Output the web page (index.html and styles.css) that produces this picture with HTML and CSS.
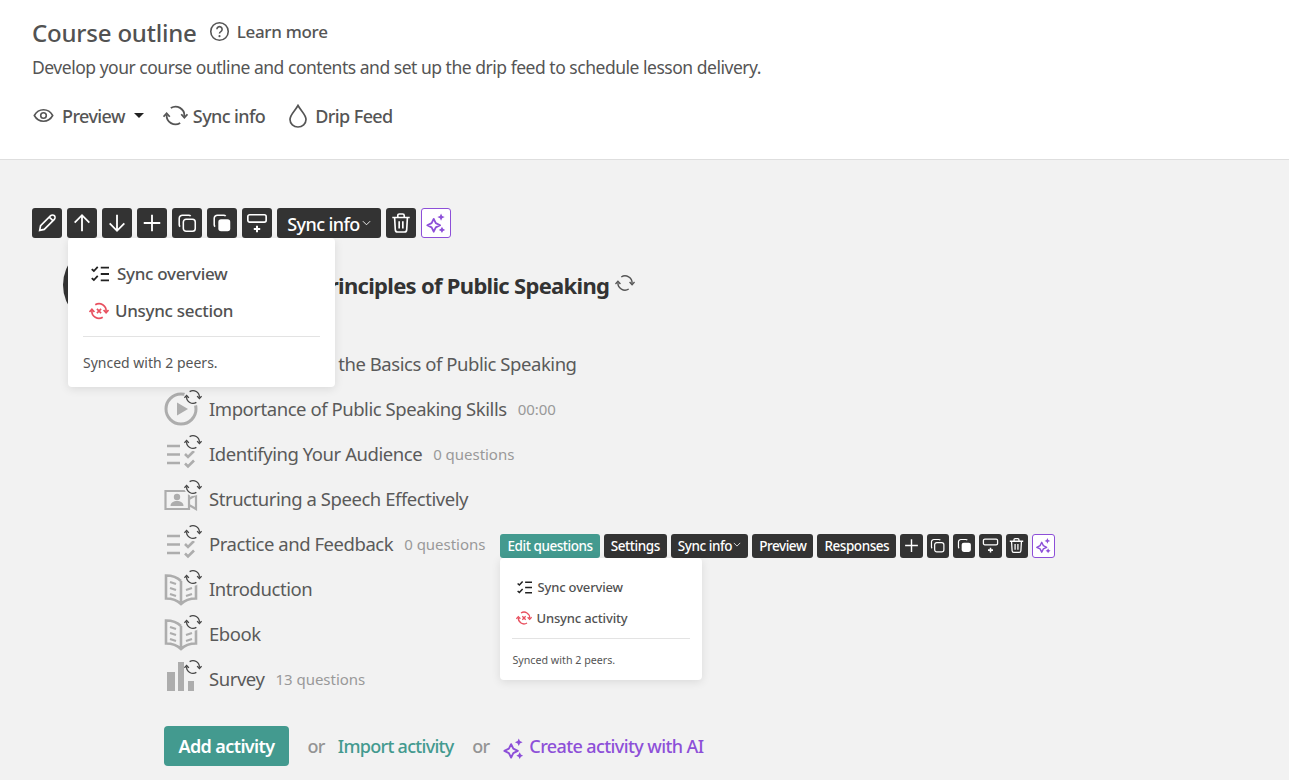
FILE: index.html
```html
<!DOCTYPE html>
<html lang="en">
<head>
  <meta charset="UTF-8">
  <title>Course outline</title>
  <link rel="stylesheet" href="styles.css">
</head>
<body>
  <svg class="defs" width="0" height="0">
    <symbol id="i-sync" viewBox="0 0 24 24">
      <path d="M7.500 4.800A8.500 8.500 0 0 1 20.500 12.500M16.500 19.200A8.500 8.500 0 0 1 3.500 11.500" fill="none" stroke="currentColor" stroke-width="1.700"/>
      <path d="M17.500 10.800l3 3.200 3-3.200M.5 13.200l3-3.200 3 3.200" fill="none" stroke="currentColor" stroke-width="1.700"/>
    </symbol>
    <symbol id="i-spark" viewBox="0 0 24 24">
      <path d="M9.500 7.500l2.300 4.700 4.700 2.300-4.700 2.300-2.300 4.700-2.300-4.700-4.700-2.300 4.700-2.300z" fill="none" stroke="currentColor" stroke-width="2" stroke-linejoin="round"/>
      <path d="M17.500 1.500l1.200 2.800 2.800 1.200-2.800 1.200-1.200 2.800-1.200-2.800-2.800-1.200 2.800-1.200zM18.500 16l1.200 2.300 2.300 1.200-2.300 1.200-1.200 2.300-1.200-2.300-2.300-1.200 2.300-1.200z" fill="currentColor"/>
    </symbol>
    <symbol id="i-plus" viewBox="0 0 24 24"><path d="M12 3v18M3 12h18" stroke="currentColor" stroke-width="2" fill="none"/></symbol>
    <symbol id="i-copy" viewBox="0 0 24 24">
      <rect x="8" y="8" width="13" height="13" rx="3" fill="none" stroke="currentColor" stroke-width="1.700"/>
      <path d="M16 4.500A2.500 2.500 0 0 0 14 3.500H7A3.500 3.500 0 0 0 3.500 7v7a2.500 2.500 0 0 0 1 2" fill="none" stroke="currentColor" stroke-width="1.700"/>
    </symbol>
    <symbol id="i-dup" viewBox="0 0 24 24">
      <rect x="8" y="8" width="13" height="13" rx="3" fill="currentColor"/>
      <path d="M16 4.500A2.500 2.500 0 0 0 14 3.500H7A3.500 3.500 0 0 0 3.500 7v7a2.500 2.500 0 0 0 1 2" fill="none" stroke="currentColor" stroke-width="1.700"/>
    </symbol>
    <symbol id="i-insert" viewBox="0 0 24 24">
      <rect x="2" y="3" width="20" height="8" rx="2" fill="none" stroke="currentColor" stroke-width="1.800"/>
      <path d="M12 15v7M8.500 18.500h7" fill="none" stroke="currentColor" stroke-width="2.200"/>
    </symbol>
    <symbol id="i-trash" viewBox="0 0 24 24">
      <path d="M2.500 6h19M8.500 6V3.800c0-.9.700-1.600 1.600-1.600h3.800c.9 0 1.600.7 1.600 1.600V6M5 6l.8 13.500c.1 1.300 1.100 2.300 2.400 2.300h7.600c1.300 0 2.300-1 2.400-2.300L19 6M10 10v8M14 10v8" fill="none" stroke="currentColor" stroke-width="1.800"/>
    </symbol>
    <symbol id="i-checks" viewBox="0 0 24 24">
      <path d="M1 5.500l2.800 2.500L9 2.500M1 17.500l2.800 2.500L9 14.500" fill="none" stroke="currentColor" stroke-width="2.400"/>
      <path d="M13 3.500h11M13 12h11M13 20.500h11" fill="none" stroke="currentColor" stroke-width="2.400"/>
    </symbol>
    <symbol id="i-unsync" viewBox="0 0 24 24">
      <path d="M7.500 4.500A8.500 8.500 0 0 1 20.500 12.500M16.500 19.500A8.500 8.500 0 0 1 3.500 11.500" fill="none" stroke="currentColor" stroke-width="2"/>
      <path d="M17.500 10.800l3 3.200 3-3.200M.5 13.200l3-3.200 3 3.200M9.500 9.500l5 5M14.500 9.500l-5 5" fill="none" stroke="currentColor" stroke-width="2"/>
    </symbol>
    <symbol id="i-quiz" viewBox="0 0 34 34">
      <path d="M3 9h13M3 17.500h13M3 26h13M21 17l3 3 6-6M21 26.500l3 3 6-6" fill="none" stroke="currentColor" stroke-width="2.600"/>
    </symbol>
    <symbol id="i-book" viewBox="0 0 34 34">
      <path d="M17 9C13 5 7 3.500 2 3.500v23c5 0 11 1.500 15 5.500 4-4 10-5.500 15-5.500V12M17 9v23" fill="none" stroke="currentColor" stroke-width="2.600"/>
      <path d="M6 10l6 2M6 16l6 2M6 22l6 2M22 18l6-2M22 24l6-2" fill="none" stroke="currentColor" stroke-width="2.200"/>
    </symbol>
  </svg>

  <header class="top">
    <div class="title-row">
      <h1>Course outline</h1>
      <a class="learn">
        <svg class="learn-icon" viewBox="0 0 24 24"><circle cx="12" cy="12" r="10" fill="none" stroke="currentColor" stroke-width="1.800"/><path d="M9 9.500a3 3 0 1 1 4.500 2.600c-1 .6-1.500 1-1.500 2.200" fill="none" stroke="currentColor" stroke-width="1.800"/><circle cx="12" cy="17.300" r="1.200" fill="currentColor"/></svg>
        Learn more
      </a>
    </div>
    <p class="intro">Develop your course outline and contents and set up the drip feed to schedule lesson delivery.</p>
    <nav class="actions">
      <a class="action">
        <svg class="eye" viewBox="0 0 24 24"><path d="M1.500 12C4 7.500 8 5.500 12 5.500s8 2 10.500 6.500C20 16.500 16 18.500 12 18.500S4 16.500 1.500 12z" fill="none" stroke="currentColor" stroke-width="1.800"/><circle cx="12" cy="12" r="3.200" fill="none" stroke="currentColor" stroke-width="1.800"/></svg>
        Preview<span class="caret"></span>
      </a>
      <a class="action tight"><svg class="big-sync"><use href="#i-sync"/></svg>Sync info</a>
      <a class="action"><svg class="drop" viewBox="0 0 24 24"><path d="M12 1.500c-3 5.500-8 9-8 14a8 7.500 0 0 0 16 0c0-5-5-8.500-8-14z" fill="none" stroke="currentColor" stroke-width="1.700"/></svg>Drip Feed</a>
    </nav>
  </header>

  <main class="outline">
    <div class="toolbar">
      <button class="tool"><svg viewBox="0 0 24 24"><path d="M4 20l1-5L16 4c1-1 3-1 4 0s1 3 0 4L9 19z M14.500 5.500l4 4" fill="none" stroke="currentColor" stroke-width="1.800"/></svg></button>
      <button class="tool"><svg viewBox="0 0 24 24"><path d="M12 21V4M4 11.500L12 3.500l8 8" fill="none" stroke="currentColor" stroke-width="2"/></svg></button>
      <button class="tool"><svg viewBox="0 0 24 24"><path d="M12 3v17M4 12.500l8 8 8-8" fill="none" stroke="currentColor" stroke-width="2"/></svg></button>
      <button class="tool"><svg><use href="#i-plus"/></svg></button>
      <button class="tool"><svg><use href="#i-copy"/></svg></button>
      <button class="tool"><svg><use href="#i-dup"/></svg></button>
      <button class="tool"><svg><use href="#i-insert"/></svg></button>
      <button class="tool text">Sync info<svg class="chev" viewBox="0 0 10 6"><path d="M1 1l4 4 4-4" fill="none" stroke="currentColor"/></svg></button>
      <button class="tool"><svg><use href="#i-trash"/></svg></button>
      <button class="tool ai"><svg><use href="#i-spark"/></svg></button>
      <div class="menu">
        <a class="menu-item first"><svg class="checks"><use href="#i-checks"/></svg>Sync overview</a>
        <a class="menu-item"><svg class="unsync"><use href="#i-unsync"/></svg>Unsync section</a>
        <p class="menu-note">Synced with 2 peers.</p>
      </div>
    </div>

    <section class="section-head">
      <span class="section-num"></span>
      <h2>Principles of Public Speaking</h2>
      <svg class="head-sync"><use href="#i-sync"/></svg>
    </section>

    <ul class="activities">
      <li class="activity">
        <span class="act-icon"><svg class="act-svg" viewBox="0 0 34 34"><path d="M4 4h26v26H4z" fill="none" stroke="currentColor" stroke-width="2.400"/></svg><svg class="badge"><use href="#i-sync"/></svg></span>
        <span class="act-name">Understanding the Basics of Public Speaking</span>
      </li>
      <li class="activity">
        <span class="act-icon"><svg class="act-svg" viewBox="0 0 34 34"><circle cx="17" cy="17" r="15" fill="none" stroke="currentColor" stroke-width="3"/><path d="M13 10.500l11 6.500-11 6.500z" fill="currentColor"/></svg><svg class="badge"><use href="#i-sync"/></svg></span>
        <span class="act-name">Importance of Public Speaking Skills</span><span class="act-meta">00:00</span>
      </li>
      <li class="activity">
        <span class="act-icon"><svg class="act-svg"><use href="#i-quiz"/></svg><svg class="badge"><use href="#i-sync"/></svg></span>
        <span class="act-name">Identifying Your Audience</span><span class="act-meta">0 questions</span>
      </li>
      <li class="activity">
        <span class="act-icon"><svg class="act-svg" viewBox="0 0 34 34"><path d="M25 27H1.500V9H25zM25 17l7-4v14l-7-4" fill="none" stroke="currentColor" stroke-width="2.200"/><circle cx="13" cy="15" r="3.200" fill="currentColor"/><path d="M6.500 24c0-3.500 3-5 6.500-5s6.500 1.500 6.500 5z" fill="currentColor"/></svg><svg class="badge"><use href="#i-sync"/></svg></span>
        <span class="act-name">Structuring a Speech Effectively</span>
      </li>
      <li class="activity">
        <span class="act-icon"><svg class="act-svg"><use href="#i-quiz"/></svg><svg class="badge"><use href="#i-sync"/></svg></span>
        <span class="act-name">Practice and Feedback</span><span class="act-meta">0 questions</span>
        <div class="act-tools">
          <button class="mini text teal">Edit questions</button>
          <button class="mini text">Settings</button>
          <button class="mini text">Sync info<svg class="chev" viewBox="0 0 10 6"><path d="M1 1l4 4 4-4" fill="none" stroke="currentColor"/></svg></button>
          <button class="mini text">Preview</button>
          <button class="mini text">Responses</button>
          <button class="mini"><svg><use href="#i-plus"/></svg></button>
          <button class="mini"><svg><use href="#i-copy"/></svg></button>
          <button class="mini"><svg><use href="#i-dup"/></svg></button>
          <button class="mini"><svg><use href="#i-insert"/></svg></button>
          <button class="mini"><svg><use href="#i-trash"/></svg></button>
          <button class="mini ai"><svg><use href="#i-spark"/></svg></button>
          <div class="menu small">
            <a class="menu-item first"><svg class="checks"><use href="#i-checks"/></svg>Sync overview</a>
            <a class="menu-item"><svg class="unsync"><use href="#i-unsync"/></svg>Unsync activity</a>
            <p class="menu-note">Synced with 2 peers.</p>
          </div>
        </div>
      </li>
      <li class="activity">
        <span class="act-icon"><svg class="act-svg"><use href="#i-book"/></svg><svg class="badge"><use href="#i-sync"/></svg></span>
        <span class="act-name">Introduction</span>
      </li>
      <li class="activity">
        <span class="act-icon"><svg class="act-svg"><use href="#i-book"/></svg><svg class="badge"><use href="#i-sync"/></svg></span>
        <span class="act-name">Ebook</span>
      </li>
      <li class="activity">
        <span class="act-icon"><svg class="act-svg" viewBox="0 0 34 34"><path d="M3 10h8v19H3zM14 0h6v29h-6zM24 19h6v10h-6z" fill="currentColor"/></svg><svg class="badge"><use href="#i-sync"/></svg></span>
        <span class="act-name">Survey</span><span class="act-meta">13 questions</span>
      </li>
    </ul>

    <div class="add-row">
      <button class="add-btn">Add activity</button>
      <span class="or">or</span>
      <a class="import">Import activity</a>
      <span class="or">or</span>
      <a class="create"><svg class="create-spark"><use href="#i-spark"/></svg>Create activity with AI</a>
    </div>
  </main>
</body>
</html>
```

FILE: styles.css
```css
/* Global */
html, body {
  height: 780px;
  overflow: hidden;
}
body {
  margin: 0;
  font-family: "Noto Sans", "Open Sans", sans-serif;
  background-color: #f2f2f2;
  color: #555;
}
.defs {
  position: absolute;
}
a {
  text-decoration: none;
}
button {
  font-family: inherit;
  border: 0;
  padding: 0;
  cursor: pointer;
}

/* Header */
.top {
  height: 160px;
  box-sizing: border-box;
  padding: 16px 32px 0;
  background: #fff;
  border-bottom: 1px solid #dedede;
}
.title-row {
  display: flex;
  align-items: center;
  height: 34px;
}
h1 {
  margin: -2px 0 0;
  font-size: 24px;
  font-weight: 500;
  letter-spacing: -0.2px;
  color: #525252;
}
.learn {
  display: flex;
  align-items: center;
  gap: 7px;
  margin-left: 12px;
  margin-top: -4px;
  font-size: 17px;
  font-weight: 500;
  letter-spacing: -0.3px;
}
.learn-icon {
  width: 21px;
  height: 21px;
}
.intro {
  margin: 2px 0 0;
  font-size: 17.5px;
  line-height: 30px;
  letter-spacing: -0.48px;
}
.actions {
  display: flex;
  align-items: center;
  gap: 21px;
  margin-top: 21px;
}
.action {
  display: flex;
  align-items: center;
  gap: 5px;
  font-size: 18px;
  font-weight: 500;
  letter-spacing: -0.6px;
}
.action:first-child {
  gap: 8px;
}
.action.tight {
  margin-left: -2px;
}
.eye {
  width: 21px;
  height: 23px;
  margin-left: 1px;
}
.caret {
  width: 0;
  height: 0;
  margin-left: 1px;
  border-left: 5px solid transparent;
  border-right: 5px solid transparent;
  border-top: 5px solid #222;
}
.big-sync {
  width: 25px;
  height: 25px;
}
.drop {
  width: 24px;
  height: 24px;
}

/* Outline area */
.outline {
  padding: 48px 32px 0;
}
.toolbar {
  position: relative;
  display: flex;
  gap: 5px;
  height: 30px;
}
.tool {
  display: flex;
  align-items: center;
  justify-content: center;
  width: 30px;
  height: 30px;
  border-radius: 3px;
  background: #333;
  color: #fff;
}
.tool svg {
  width: 22px;
  height: 22px;
}
.tool.text {
  width: 104px;
  padding-top: 2px;
  font-size: 18px;
  font-weight: 500;
  letter-spacing: -0.6px;
}
.tool .chev {
  width: 9px;
  height: 6px;
  margin: -3px 0 0 2px;
}
.mini .chev {
  width: 8px;
  height: 5px;
  margin: -2px 0 0 1px;
}
.tool.ai,
.mini.ai {
  background: #fff;
  color: #8d4fd8;
  border: 1px solid #8d4fd8;
  box-sizing: border-box;
}

/* Sync menu */
.menu {
  position: absolute;
  z-index: 5;
  top: 30px;
  left: 36px;
  width: 267px;
  height: 149px;
  box-sizing: border-box;
  padding: 17px 15px 0;
  background: #fff;
  border-radius: 4px;
  box-shadow: 0 2px 10px rgba(0, 0, 0, 0.1);
}
.menu-item {
  display: flex;
  align-items: center;
  gap: 6px;
  height: 37px;
  font-size: 17px;
  font-weight: 500;
  letter-spacing: -0.3px;
  color: #525252;
}
.menu-item.first {
  gap: 8px;
  padding-left: 8px;
}
.checks {
  width: 18px;
  height: 18px;
  color: #222;
}
.unsync {
  width: 20px;
  height: 20px;
  margin-left: 6px;
  color: #e8505f;
}
.menu-note {
  margin: 7px 0 0;
  padding-top: 16px;
  border-top: 1px solid #e3e3e3;
  font-size: 14px;
  line-height: 20px;
}

/* Section heading */
.section-head {
  display: flex;
  align-items: center;
  margin: 23px 0 0 31px;
  height: 48px;
}
.section-num {
  flex: none;
  width: 84px;
  height: 84px;
  margin: -18px 0;
  border-radius: 50%;
  background: #333;
}
h2 {
  margin: 0 0 0 169px;
  font-size: 22px;
  font-weight: 700;
  letter-spacing: -0.7px;
  color: #333;
  white-space: nowrap;
}
.head-sync {
  width: 20px;
  height: 20px;
  margin: -4px 0 0 6px;
}

/* Activities */
.activities {
  list-style: none;
  margin: 32px 0 0 132px;
  padding: 0;
}
.activity {
  display: flex;
  align-items: center;
  height: 45px;
}
.act-icon {
  position: relative;
  flex: none;
  width: 34px;
  height: 34px;
  margin-right: 11px;
  color: #adadad;
}
.act-svg {
  display: block;
  width: 34px;
  height: 34px;
}
.badge {
  position: absolute;
  top: -4px;
  left: 20px;
  width: 18px;
  height: 18px;
  color: #444;
  background: #f2f2f2;
  border-radius: 50%;
}
.act-name {
  font-size: 18.5px;
  letter-spacing: -0.45px;
  color: #5a5a5a;
  white-space: nowrap;
}
.act-meta {
  margin-left: 11px;
  font-size: 15px;
  letter-spacing: -0.02px;
  color: #999;
  white-space: nowrap;
}

/* Activity tools */
.act-tools {
  position: relative;
  display: flex;
  gap: 4px;
  margin: 4px 0 0 15px;
}
.mini {
  display: flex;
  align-items: center;
  justify-content: center;
  width: 22.4px;
  height: 24px;
  border-radius: 3px;
  background: #333;
  color: #fff;
}
.mini svg {
  width: 17px;
  height: 17px;
}
.mini.text {
  width: auto;
  padding: 0 7px;
  font-size: 13.5px;
  font-weight: 500;
  letter-spacing: -0.44px;
}
.mini.teal {
  background: #439a8f;
}
.menu.small {
  top: 24px;
  left: 0;
  width: 202px;
  height: 122px;
  padding: 14px 12px 0;
}
.menu.small .menu-item {
  height: 31px;
  gap: 4px;
  font-size: 13px;
  letter-spacing: -0.15px;
}
.menu.small .menu-item.first {
  gap: 5px;
  padding-left: 5px;
}
.menu.small .checks {
  width: 15px;
  height: 15px;
}
.menu.small .unsync {
  width: 16px;
  height: 16px;
  margin-left: 4px;
}
.menu.small .menu-note {
  margin-top: 4px;
  padding-top: 13px;
  font-size: 10.7px;
  line-height: 16px;
}

/* Add row */
.add-row {
  display: flex;
  align-items: center;
  margin: 25px 0 0 132px;
  font-size: 18px;
  font-weight: 500;
  letter-spacing: -0.7px;
}
.add-btn {
  width: 125px;
  height: 40px;
  border-radius: 4px;
  background: #439a8f;
  color: #fff;
  font-size: 18px;
  font-weight: 600;
  letter-spacing: -0.6px;
}
.or {
  margin: 0 13px 0 18.5px;
  color: #949494;
}
.import {
  color: #439a8f;
}
.create {
  display: flex;
  align-items: center;
  gap: 4px;
  letter-spacing: -0.6px;
  color: #8d4fd8;
}
.create-spark {
  width: 23px;
  height: 23px;
  margin-top: 4px;
}
```
